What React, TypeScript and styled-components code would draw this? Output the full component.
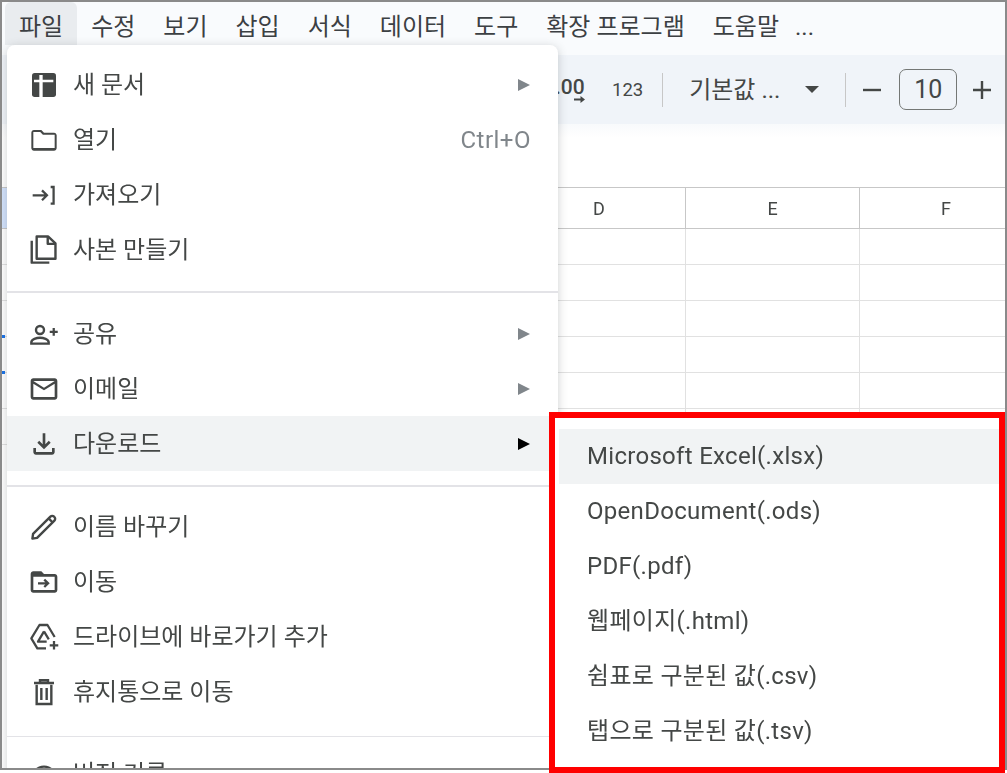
import React from "react";
import styled, { createGlobalStyle } from "styled-components";

const Global = createGlobalStyle`
  html, body { margin: 0; padding: 0; background: #fff; }
  #root { width: 1007px; height: 773px; overflow: hidden; }
`;
const FONT = `Roboto, "Noto Sans CJK KR", "Liberation Sans", sans-serif`;
const Outer = styled.div`
  position: relative; width: 1007px; height: 773px; overflow: hidden; background: #fff;
  font-family: ${FONT}; color: #444746;
`;
const Page = styled.div`
  position: relative; width: 1007px; height: 770px; overflow: hidden; box-sizing: border-box;
  border: 2px solid #8a8a8a; background: #fff;
`;
const Sheet = styled.div`filter: blur(0.45px);`;
const MenuBar = styled.div`display: flex; height: 43px; align-items: stretch; padding-left: 3px; background: #f9fbfd;`;
const BarItem = styled.div<{ $active?: boolean; $tight?: boolean }>`
  display: flex; align-items: center; padding: 7px 14px 0; font-size: 24px; line-height: 30px; white-space: nowrap; color: #3c4043;
  margin-left: ${(p) => (p.$tight ? "-12px" : "0")};
  background: ${(p) => (p.$active ? "#e9ecef" : "transparent")}; border-radius: 6px 6px 0 0;
`;
const Gap = styled.div`height: 10px; background: #f9fbfd;`;
const Toolbar = styled.div`display: flex; align-items: center; height: 69px; padding-left: 553px; background: #f0f4f9; color: #444746;`;
const Decimal = styled.div`position: relative; width: 33px; font-size: 21px; font-weight: 500; line-height: 1; margin-top: -4px;`;
const ArrowHolder = styled.svg`position: absolute; left: 19px; top: 18px;`;
const Num = styled.div`font-size: 18.5px; margin-left: 24px; white-space: nowrap;`;
const Sep = styled.div<{ $ml: number }>`width: 1px; height: 34px; background: #c7c7c7; margin-left: ${(p) => p.$ml}px;`;
const FontName = styled.div`font-size: 24px; line-height: 30px; margin-left: 26px; width: 91px; white-space: nowrap;`;
const Caret = styled.div`width: 0; height: 0; margin-left: 25px; border-left: 7px solid transparent; border-right: 7px solid transparent; border-top: 7px solid #444746;`;
const Step = styled.svg<{ $ml: number }>`flex: none; width: 18px; height: 18px; margin-left: ${(p) => p.$ml}px;`;
const SizeBox = styled.div`
  box-sizing: border-box; width: 58px; height: 41px; margin-left: 18px; border: 1.5px solid #747775; border-radius: 7px;
  display: flex; align-items: center; justify-content: center; font-size: 25px;
`;
const Formula = styled.div`height: 63px; background: #fff; background-image: linear-gradient(#f8fafc, #fff 14px);`;
const Grid = styled.div`display: grid; grid-template-columns: 510px 173px 174px 173px;`;
const Head = styled.div<{ $first?: boolean }>`
  height: 40px; border-top: 1px solid #c7c7c7; border-bottom: 1px solid #c7c7c7; border-left: ${(p) => (p.$first ? "none" : "1px solid #c7c7c7")};
  display: flex; align-items: center; justify-content: center; font-size: 18px; color: #444746;
  background: ${(p) => (p.$first ? "#d3e3fd" : "transparent")};
`;
const Cell = styled.div<{ $first?: boolean }>`
  position: relative; height: 35px; border-bottom: 1px solid #e1e1e1; border-left: ${(p) => (p.$first ? "none" : "1px solid #e1e1e1")};
`;
const Dot = styled.div`position: absolute; left: 0; bottom: -2px; width: 3px; height: 3px; background: #1a73e8;`;

const Menu = styled.div`
  position: absolute; left: 5px; top: 43px; width: 551px; height: 740px; background: #fff; border-radius: 8px;
  box-shadow: 0 2px 10px rgba(60,64,67,.25); display: flex; flex-direction: column; padding-top: 12px; box-sizing: border-box;
  filter: blur(0.45px);
`;
const Row = styled.div<{ $hot?: boolean }>`
  flex: none; height: 55px; display: flex; align-items: center; padding: 0 27px 0 21px; font-size: 24px; line-height: 30px; color: #444746;
  background: ${(p) => (p.$hot ? "#f1f3f4" : "transparent")};
`;
const IconBox = styled.svg`flex: none; width: 32px; height: 32px; margin-right: 13px; color: #444746;`;
const Label = styled.span`flex: 1; white-space: nowrap; padding-top: 1px;`;
const Hint = styled.span`font-size: 24px; color: #80868b; letter-spacing: .5px;`;
const Tri = styled.div<{ $dark?: boolean }>`
  width: 0; height: 0; border-top: 6px solid transparent; border-bottom: 6px solid transparent;
  border-left: 12px solid ${(p) => (p.$dark ? "#000" : "#80868b")}; margin-right: 1px;
`;
const Divider = styled.div<{ $mt: number; $mb: number; $thin?: boolean }>`
  flex: none; height: ${(p) => (p.$thin ? 1 : 2)}px; background: #e3e3e7; margin: ${(p) => p.$mt}px 0 ${(p) => p.$mb}px;
`;

const SubFrame = styled.div`
  position: absolute; left: 549px; top: 412px; width: 456px; height: 361px; box-sizing: border-box;
  border: 6px solid #ff0000; background: #fff; padding: 11px 0 0 4px;
`;
const SubList = styled.div`filter: blur(0.45px);`;
const SubRow = styled.div<{ $hot?: boolean }>`
  height: 55px; display: flex; align-items: center; padding: 0 0 2px 28px; box-sizing: border-box; font-size: 24px; line-height: 30px; color: #444746; letter-spacing: .3px;
  background: ${(p) => (p.$hot ? "#f1f3f4" : "transparent")};
`;

const I = ({ children }: { children: React.ReactNode }) => (
  <IconBox viewBox="0 0 24 24" fill="currentColor">{children}</IconBox>
);
const icons: Record<string, React.ReactNode> = {
  plus: (
    <>
      <rect x="3" y="3" width="18" height="18" rx="2" />
      <path d="M8.500 4.500H11V8h8v2h-8v11H8.500V10h-4V8h4z" fill="#fff" />
    </>
  ),
  folder: <path d="M9.170 6l2 2H20v10H4V6h5.170M10 4.500H4.500c-1.100 0-1.990.9-1.990 2L2.500 18c0 1.100.9 2 2 2h15c1.100 0 2-.9 2-2V8.500c0-1.100-.9-2-2-2h-7.500l-2-2z" fillRule="evenodd" />,
  importer: (
    <g fill="none" stroke="currentColor" strokeWidth="1.700">
      <path d="M3.500 12.200h10M10.500 8.500l3.700 3.700-3.700 3.700" />
      <path d="M17 6h2.200v12.500H17" />
    </g>
  ),
  copy: (
    <g fill="none" stroke="currentColor" strokeWidth="1.800" strokeLinejoin="round">
      <path d="M2.800 5v16.500H16" />
      <path d="M6.500 1.900h8.700L20.600 7v11.600H6.500z" />
      <path d="M14.800 2v5.400h5.600" />
    </g>
  ),
  person: (
    <g fill="none" stroke="currentColor" strokeWidth="1.800">
      <circle cx="9" cy="9" r="3" />
      <path d="M2.500 19.200v-1c0-2.200 4-3.400 6.500-3.400s6.500 1.200 6.500 3.400v1z" />
      <path d="M16.300 10.400h6M19.300 7.500v5.800" strokeWidth="1.700" />
    </g>
  ),
  mail: <path d="M22 6c0-1.100-.9-2-2-2H4c-1.100 0-2 .9-2 2v12c0 1.100.9 2 2 2h16c1.100 0 2-.9 2-2V6zm-2 0l-8 5-8-5h16zm0 12H4V8l8 5 8-5v10z" />,
  download: <path d="M12 16l-5-5 1.400-1.450 2.600 2.600V4h2v8.150l2.600-2.600L17 11l-5 5zm-6 4c-.55 0-1.020-.2-1.410-.59A1.930 1.930 0 0 1 4 18v-3h2v3h12v-3h2v3c0 .55-.2 1.020-.59 1.410-.39.39-.86.59-1.410.59H6z" />,
  pencil: (
    <g fill="none" stroke="currentColor" strokeWidth="1.800" strokeLinejoin="round">
      <path d="M3.300 20.700l.5-3.500L16.800 4.200a1.900 1.900 0 0 1 2.700 0l.3.3a1.900 1.900 0 0 1 0 2.700L6.800 20.200z" />
      <path d="M15.500 5.600l3.200 3.200" />
    </g>
  ),
  move: (
    <>
      <path d="M10 4H4c-1.100 0-2 .9-2 2v12c0 1.100.9 2 2 2h16c1.100 0 2-.9 2-2V8c0-1.100-.9-2-2-2h-8l-2-2zm10 14H4V8h16v10z" />
      <path d="M12.800 9.600l-1.200 1.200 1.400 1.300H7.500v1.800H13l-1.400 1.300 1.200 1.200 3.500-3.400z" />
    </>
  ),
  drive: (
    <g fill="none" stroke="currentColor" strokeWidth="1.700" strokeLinejoin="round">
      <path d="M13.500 20.500H7L2.500 13 8.600 3h6l5.400 9" />
      <path d="M12 7.800L7.500 15.500h6.500M12 7.800l3.600 6" />
      <path d="M19.500 15v6.400M16.300 18.200h6.400" />
    </g>
  ),
  trash: (
    <g fill="none" stroke="currentColor" strokeWidth="1.800">
      <path d="M6.500 6.500V21h11V6.500" />
      <path d="M4.500 5.300h15M9 5.300V3.200h6v2.100" />
      <path d="M10 9v9M14 9v9" />
    </g>
  ),
  history: <circle cx="12" cy="15.500" r="9" fill="none" stroke="currentColor" strokeWidth="1.800" />,
};

const rows = [0, 1, 2, 3, 4, 5];
const columns = [0, 1, 2, 3];
const dotted = [2, 3];

export default function App() {
  return (
    <Outer>
      <Global />
      <Page>
        <Sheet>
          <MenuBar>
            <BarItem $active>파일</BarItem>
            {["수정", "보기", "삽입", "서식", "데이터", "도구", "확장 프로그램", "도움말"].map((t) => (
              <BarItem key={t}>{t}</BarItem>
            ))}
            <BarItem $tight>...</BarItem>
          </MenuBar>
          <Gap />
          <Toolbar>
            <Decimal>
              .00
              <ArrowHolder width="11" height="9" viewBox="0 0 11 9" fill="currentColor">
                <path d="M0 3.600h6.500V1L11 4.500 6.500 8V5.400H0z" />
              </ArrowHolder>
            </Decimal>
            <Num>123</Num>
            <Sep $ml={19} />
            <FontName>기본값 ...</FontName>
            <Caret />
            <Sep $ml={26} />
            <Step $ml={17} viewBox="0 0 18 18"><path d="M0 9h18" stroke="#444746" strokeWidth="2.400" /></Step>
            <SizeBox>10</SizeBox>
            <Step $ml={16} viewBox="0 0 18 18"><path d="M0 9h18M9 0v18" stroke="#444746" strokeWidth="2.400" /></Step>
          </Toolbar>
          <Formula />
          <Grid>
            <Head $first />
            <Head>D</Head>
            <Head>E</Head>
            <Head>F</Head>
            {rows.map((r) =>
              columns.map((c) => (
                <Cell key={`${r}-${c}`} $first={c === 0}>
                  {c === 0 && dotted.includes(r) ? <Dot /> : null}
                </Cell>
              ))
            )}
          </Grid>
        </Sheet>

        <Menu>
          <Row><I>{icons.plus}</I><Label>새 문서</Label><Tri /></Row>
          <Row><I>{icons.folder}</I><Label>열기</Label><Hint>Ctrl+O</Hint></Row>
          <Row><I>{icons.importer}</I><Label>가져오기</Label></Row>
          <Row><I>{icons.copy}</I><Label>사본 만들기</Label></Row>
          <Divider $mt={14} $mb={13} />
          <Row><I>{icons.person}</I><Label>공유</Label><Tri /></Row>
          <Row><I>{icons.mail}</I><Label>이메일</Label><Tri /></Row>
          <Row $hot><I>{icons.download}</I><Label>다운로드</Label><Tri $dark /></Row>
          <Divider $mt={14} $mb={12} />
          <Row><I>{icons.pencil}</I><Label>이름 바꾸기</Label></Row>
          <Row><I>{icons.move}</I><Label>이동</Label></Row>
          <Row><I>{icons.drive}</I><Label>드라이브에 바로가기 추가</Label></Row>
          <Row><I>{icons.trash}</I><Label>휴지통으로 이동</Label></Row>
          <Divider $thin $mt={17} $mb={9} />
          <Row><I>{icons.history}</I><Label>버전 기록</Label></Row>
        </Menu>
      </Page>

      <SubFrame>
        <SubList>
          <SubRow $hot>Microsoft Excel(.xlsx)</SubRow>
          <SubRow>OpenDocument(.ods)</SubRow>
          <SubRow>PDF(.pdf)</SubRow>
          <SubRow>웹페이지(.html)</SubRow>
          <SubRow>쉼표로 구분된 값(.csv)</SubRow>
          <SubRow>탭으로 구분된 값(.tsv)</SubRow>
        </SubList>
      </SubFrame>
    </Outer>
  );
}
